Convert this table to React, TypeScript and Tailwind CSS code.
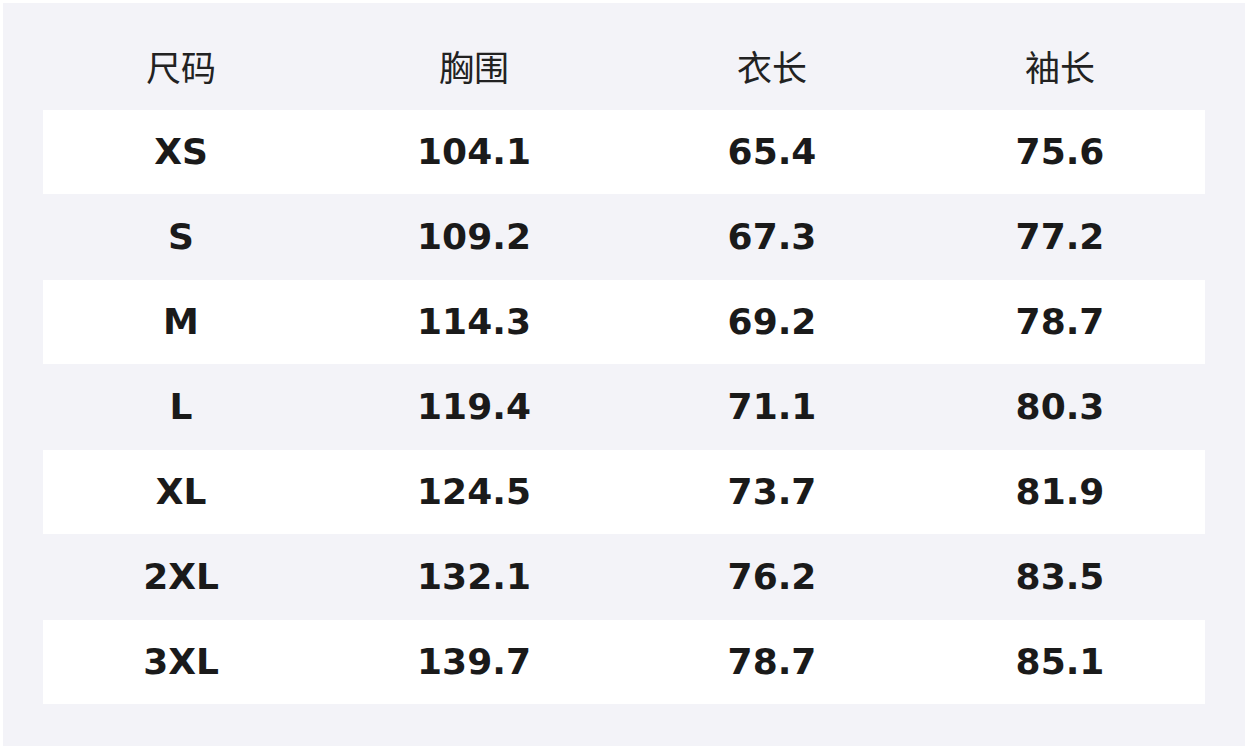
import React from "react";

const rows = [
  ["XS", "104.1", "65.4", "75.6"],
  ["S", "109.2", "67.3", "77.2"],
  ["M", "114.3", "69.2", "78.7"],
  ["L", "119.4", "71.1", "80.3"],
  ["XL", "124.5", "73.7", "81.9"],
  ["2XL", "132.1", "76.2", "83.5"],
  ["3XL", "139.7", "78.7", "85.1"],
];

const headers = ["尺码", "胸围", "衣长", "袖长"];

export default function App() {
  return (
    <div
      className="w-[1248px] h-[748px] bg-white pt-[3px] px-[3px] pb-[2px]"
      style={{ fontFamily: '"DejaVu Sans", "Noto Sans CJK SC", sans-serif' }}
    >
      <div className="w-full h-full bg-[#f3f3f8] px-[40px] pt-[20px]">
        <div className="grid grid-cols-[276px_310px_286px_290px] h-[87px] items-center">
          {headers.map((h) => (
            <div
              key={h}
              className="text-center text-[35px] text-[#222222]"
              style={{ fontFamily: '"Noto Sans CJK SC", sans-serif' }}
            >
              {h}
            </div>
          ))}
        </div>
        <div className="flex flex-col gap-[1px]">
          {rows.map((r, i) => (
            <div
              key={r[0]}
              className={`grid grid-cols-[276px_310px_286px_290px] h-[84px] items-center ${
                i % 2 === 0 ? "bg-white" : "bg-transparent"
              }`}
            >
              {r.map((c, j) => (
                <div key={j} className="text-center text-[36px] font-bold text-[#1a1a1a]">
                  {c}
                </div>
              ))}
            </div>
          ))}
        </div>
      </div>
    </div>
  );
}
